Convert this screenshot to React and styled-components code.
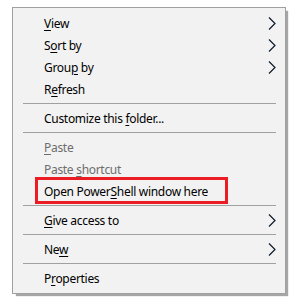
import React from "react";
import styled, { createGlobalStyle } from "styled-components";

const GlobalStyle = createGlobalStyle`
  html, body {
    margin: 0;
    padding: 0;
    background: #ffffff;
  }
  body {
    font-family: "Noto Sans", "Open Sans", sans-serif;
  }
`;

const Page = styled.div`
  width: 300px;
  height: 305px;
  padding: 7px 0 0 12px;
  box-sizing: border-box;
`;

const Menu = styled.div`
  width: 274px;
  box-sizing: border-box;
  background: #f2f2f2;
  border: 1px solid #a0a0a0;
  box-shadow: 3px 3px 1px -1px rgba(0, 0, 0, 0.35);
  padding: 4px 0;
  display: flex;
  flex-direction: column;
`;

const Item = styled.div`
  position: relative;
  height: 22px;
  display: flex;
  align-items: center;
  padding: 1px 9px 0 31px;
  box-sizing: border-box;
  font-size: 12px;
  letter-spacing: -0.3px;
  color: ${(p) => (p.disabled ? "#6d6d6d" : "#000000")};
  white-space: nowrap;
`;

const Label = styled.span`
  flex: 1;
`;

const Key = styled.span`
  text-decoration: underline;
  text-underline-offset: 2px;
`;

const Separator = styled.div`
  height: 7px;
  display: flex;
  align-items: center;
  padding: 0 9px 0 10px;

  &::after {
    content: "";
    flex: 1;
    height: 1px;
    background: #a0a0a0;
  }
`;

const Highlight = styled.div`
  position: absolute;
  left: 22px;
  top: -3px;
  width: 193px;
  height: 27px;
  box-sizing: border-box;
  border: 3px solid #ec1c24;
  pointer-events: none;
`;

const Chevron = () => (
  <svg width="8" height="13" viewBox="0 0 8 13">
    <polyline
      points="1,0.5 7,6.5 1,12.5"
      fill="none"
      stroke="#0f1a2a"
      strokeWidth="1.2"
    />
  </svg>
);

const entries = [
  { label: ["", "V", "iew"], sub: true },
  { label: ["S", "o", "rt by"], sub: true },
  { label: ["Grou", "p", " by"], sub: true },
  { label: ["R", "e", "fresh"] },
  { sep: true },
  { label: ["Customize this ", "f", "older..."] },
  { sep: true },
  { label: ["", "P", "aste"], disabled: true },
  { label: ["Paste ", "s", "hortcut"], disabled: true },
  { label: ["Open Power", "S", "hell window here"], marked: true },
  { sep: true },
  { label: ["", "G", "ive access to"], sub: true },
  { sep: true },
  { label: ["Ne", "w", ""], sub: true },
  { sep: true },
  { label: ["P", "r", "operties"] },
];

export default function App() {
  return (
    <>
      <GlobalStyle />
      <Page>
        <Menu>
          {entries.map((e, i) =>
            e.sep ? (
              <Separator key={i} />
            ) : (
              <Item key={i} disabled={e.disabled}>
                <Label>
                  {e.label[0]}
                  <Key>{e.label[1]}</Key>
                  {e.label[2]}
                </Label>
                {e.sub && <Chevron />}
                {e.marked && <Highlight />}
              </Item>
            )
          )}
        </Menu>
      </Page>
    </>
  );
}
